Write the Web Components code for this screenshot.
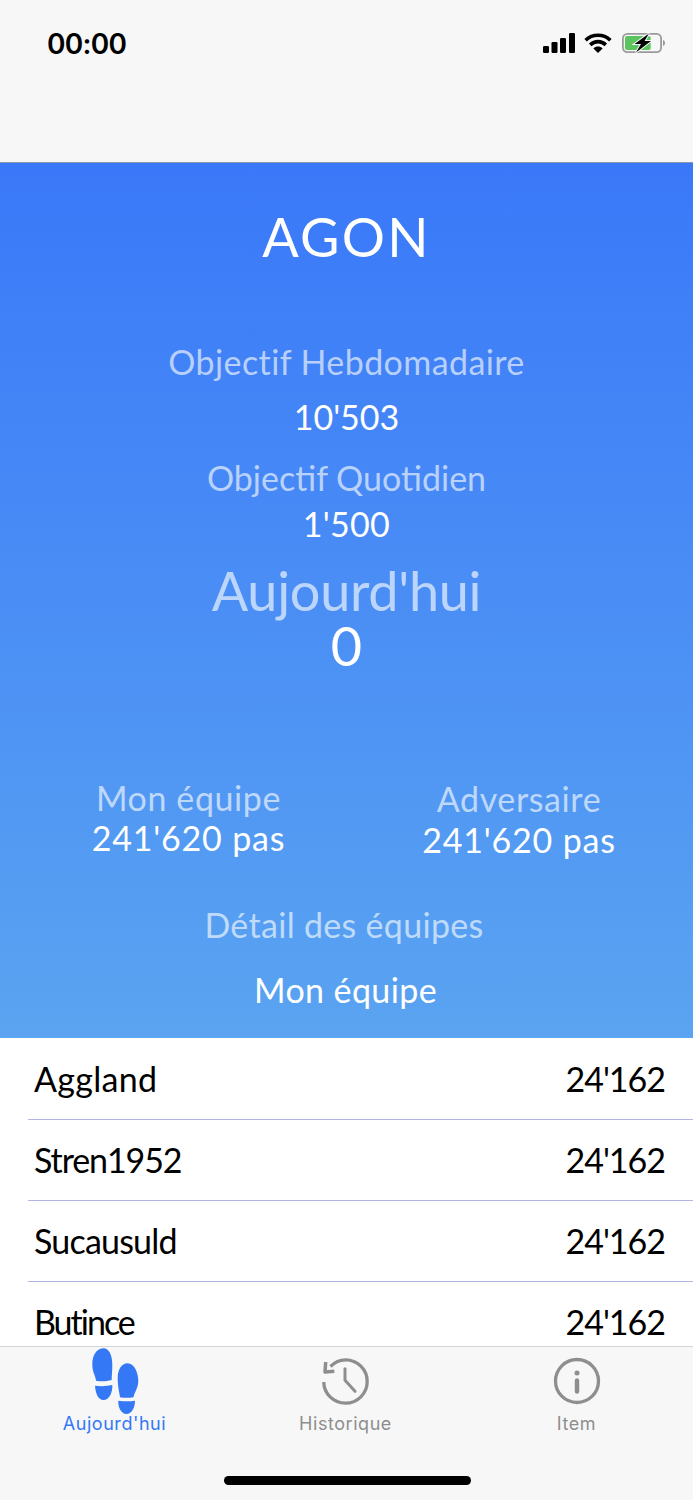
<!DOCTYPE html>
<html lang="fr">
<head>
<meta charset="utf-8">
<title>Agon</title>
<style>
  html, body { margin: 0; padding: 0; background: #fff; }
  body { width: 693px; height: 1500px; overflow: hidden; display: flex; flex-direction: column; font-family: "Lato", sans-serif; }
</style>
</head>
<body>
<status-bar></status-bar>
<agon-hero></agon-hero>
<team-list>
  <team-row name="Aggland" steps="24'162" style="--name-spacing:.3px"></team-row>
  <team-row name="Stren1952" steps="24'162" style="--name-spacing:-1.1px"></team-row>
  <team-row name="Sucausuld" steps="24'162" style="--name-spacing:-.8px"></team-row>
  <team-row name="Butince" steps="24'162" style="--name-spacing:-2px"></team-row>
</team-list>
<tab-bar>
  <tab-item label="Aujourd'hui" icon="steps" active></tab-item>
  <tab-item label="Historique" icon="history"></tab-item>
  <tab-item label="Item" icon="info"></tab-item>
</tab-bar>

<script>
class StatusBar extends HTMLElement {
  constructor() {
    super();
    this.attachShadow({ mode: 'open' });
    this.shadowRoot.innerHTML = `
      <style>
        :host { display: block; height: 163px; box-sizing: border-box; background: #f7f7f7; border-bottom: 1px solid #8d97ab; }
        .bar { display: flex; justify-content: space-between; align-items: center; height: 86px; padding: 0 28px 0 47px; }
        .time { font: 600 28px "Inter", sans-serif; letter-spacing: -.7px; color: #000; padding-top: 1px; }
        .icons { display: flex; align-items: center; gap: 9px; }
        .icons svg:nth-child(2) { margin-right: 1px; }
        svg { display: block; }
      </style>
      <div class="bar">
        <span class="time">00:00</span>
        <div class="icons">
          <svg width="32" height="20" viewBox="0 0 32 20">
            <rect x="0" y="13" width="6" height="7" rx="1.2"/>
            <rect x="8.500" y="9" width="6" height="11" rx="1.2"/>
            <rect x="17" y="5" width="6" height="15" rx="1.2"/>
            <rect x="26" y="0" width="6" height="20" rx="1.2"/>
          </svg>
          <svg width="28" height="20" viewBox="0 0 28 20" fill="none" stroke="#000" stroke-width="3.600">
            <path d="M1.600 7.200C8.600 .6 19.400 .6 26.400 7.200"/>
            <path d="M6.200 11.800C10.800 7.600 17.200 7.600 21.800 11.800"/>
            <path d="M14 20l-4.600-4.600C12 13 16 13 18.600 15.400z" fill="#000" stroke="none"/>
          </svg>
          <svg width="43" height="20" viewBox="0 0 43 20">
            <rect x=".9" y=".9" width="38.200" height="18.200" rx="4.500" fill="none" stroke="#9b9b9b" stroke-width="1.800"/>
            <path d="M41 7c1.200.4 2 1.500 2 3s-.8 2.600-2 3z" fill="#9b9b9b"/>
            <rect x="3" y="3" width="25.700" height="14" rx="2" fill="#5cc45f"/>
            <path d="M27 .5L12.500 11H19L14 19.500 29 8h-6.500z" fill="#000" stroke="#f7f7f7" stroke-width="2" paint-order="stroke"/>
          </svg>
        </div>
      </div>`;
  }
}

class HeroLine extends HTMLElement {
  constructor() {
    super();
    this.attachShadow({ mode: 'open' });
    this.shadowRoot.innerHTML = `
      <style>
        :host { display: block; text-align: center; white-space: nowrap; color: #fff; font-size: 34px; line-height: 40px; }
        :host([soft]) { color: rgba(255, 255, 255, .63); }
      </style>
      <slot></slot>`;
  }
}

class AgonHero extends HTMLElement {
  constructor() {
    super();
    this.attachShadow({ mode: 'open' });
    this.shadowRoot.innerHTML = `
      <style>
        :host { display: block; height: 875px; box-sizing: border-box; padding-top: 44px; background: linear-gradient(#3a78f9, #5aa4f1); }
        .title { font-size: 54px; line-height: 60px; letter-spacing: 2.2px; }
        .big { font-size: 54px; line-height: 52px; }
        .teams { display: grid; grid-template-columns: 377px 284px; justify-content: start; margin-top: 106px; }
        .adv { padding-top: 1px; }
        .adv hero-line + hero-line { margin-top: 1px; }
      </style>
      <hero-line class="title">AGON</hero-line>
      <hero-line soft style="margin-top:75px;letter-spacing:.4px">Objectif Hebdomadaire</hero-line>
      <hero-line style="margin-top:15px">10'503</hero-line>
      <hero-line soft style="margin-top:21px">Objectif Quotidien</hero-line>
      <hero-line style="margin-top:6px;letter-spacing:.3px">1'500</hero-line>
      <hero-line soft class="big" style="margin-top:21px;letter-spacing:-.3px">Aujourd'hui</hero-line>
      <hero-line class="big" style="margin-top:3px">0</hero-line>
      <div class="teams">
        <div>
          <hero-line soft style="letter-spacing:.6px">Mon équipe</hero-line>
          <hero-line style="letter-spacing:.8px">241'620 pas</hero-line>
        </div>
        <div class="adv">
          <hero-line soft style="letter-spacing:.6px">Adversaire</hero-line>
          <hero-line style="letter-spacing:.8px">241'620 pas</hero-line>
        </div>
      </div>
      <hero-line soft style="margin-top:45px;padding-right:5px;letter-spacing:.3px">Détail des équipes</hero-line>
      <hero-line style="margin-top:25px;padding-right:2px;letter-spacing:.4px">Mon équipe</hero-line>`;
  }
}

class TeamList extends HTMLElement {
  constructor() {
    super();
    this.attachShadow({ mode: 'open' });
    this.shadowRoot.innerHTML = `
      <style>
        :host { display: block; height: 308px; box-sizing: border-box; padding-top: 1px; overflow: hidden; background: #fff; }
      </style>
      <slot></slot>`;
  }
}

class TeamRow extends HTMLElement {
  constructor() {
    super();
    this.attachShadow({ mode: 'open' });
    this.shadowRoot.innerHTML = `
      <style>
        :host { display: block; margin-left: 28px; height: 81px; box-sizing: border-box; border-bottom: 1px solid #b5b5e4; }
        .row { display: flex; justify-content: space-between; align-items: center; height: 78px; padding: 0 28px 0 6px; font-size: 34px; color: #000; }
        .name { letter-spacing: var(--name-spacing, 0); }
        .steps { letter-spacing: -1px; }
      </style>
      <div class="row"><span class="name"></span><span class="steps"></span></div>`;
  }
  connectedCallback() {
    this.shadowRoot.querySelector('.name').textContent = this.getAttribute('name');
    this.shadowRoot.querySelector('.steps').textContent = this.getAttribute('steps');
  }
}

class TabBar extends HTMLElement {
  constructor() {
    super();
    this.attachShadow({ mode: 'open' });
    this.shadowRoot.innerHTML = `
      <style>
        :host { display: block; position: relative; height: 154px; box-sizing: border-box; background: #f7f7f7; border-top: 1px solid #d4d4d4; }
        .tabs { display: grid; grid-template-columns: repeat(3, 231px); margin-left: -1px; }
        .home { position: absolute; left: 224px; top: 129px; width: 247px; height: 9px; border-radius: 5px; background: #000; }
      </style>
      <div class="tabs"><slot></slot></div>
      <div class="home"></div>`;
  }
}

const TAB_ICONS = {
  steps: `<svg width="50" height="68" viewBox="0 0 50 68" fill="#3478f6">
      <path d="M13.500 1.300C19 1.300 22.300 8 22.300 18C22.300 24 21.700 29 21.700 33C16 34.500 11 34.500 6 33.700C5.500 28 2.300 26 2.300 17C2.300 8 7 1.300 13.500 1.300z"/>
      <path d="M5 38.700C11 39.500 17 39.200 22.300 38C22.800 45 19.500 53 13.500 53C8 53 5.500 46 5 38.700z"/>
      <path d="M37.500 16.300C44 16.300 48.300 25 48.300 34C48.300 41 44.500 45 43.500 50.300C39 51 34 51 30 50.300C29.500 45 27.700 41 27.700 31C27.700 23 31.500 16.300 37.500 16.300z"/>
      <path d="M28.300 53.700C34 54.500 40 54.500 45 53.700C45 60 42 67 36.500 67C31 67 28 60 28.300 53.700z"/>
    </svg>`,
  history: `<svg width="50" height="50" viewBox="0 0 50 50" fill="none" stroke="#8e8e8e" stroke-width="3.300">
      <path d="M9.500 10.500C13.500 6.300 18.700 3.800 24.500 3.800c12 0 21.700 9.700 21.700 21.700s-9.700 21.700-21.700 21.700S2.800 37.500 2.800 26"/>
      <path d="M4.700 6L4 16l9.300-.7" stroke-width="3.500" stroke-linejoin="round"/>
      <path d="M24 12.700v11.600l10 11" stroke-width="3" stroke-linecap="round" stroke-linejoin="round"/>
    </svg>`,
  info: `<svg width="50" height="50" viewBox="0 0 50 50" fill="none" stroke="#8e8e8e" stroke-width="3.300">
      <circle cx="25" cy="25" r="21.500"/>
      <circle cx="25" cy="17" r="2.500" fill="#8e8e8e" stroke="none"/>
      <path d="M25 24.500v11" stroke-width="4.500" stroke-linecap="round"/>
    </svg>`
};

class TabItem extends HTMLElement {
  constructor() {
    super();
    this.attachShadow({ mode: 'open' });
    this.shadowRoot.innerHTML = `
      <style>
        :host { display: block; color: #8e8e8e; text-align: center; }
        :host([active]) { color: #3478f6; }
        .icon { display: flex; justify-content: center; align-items: flex-start; height: 67px; box-sizing: border-box; padding-top: 9px; }
        :host([active]) .icon { padding-top: 0; }
        svg { display: block; flex: none; }
        .label { font: 400 18px/20px "Inter", sans-serif; letter-spacing: .55px; white-space: nowrap; }
      </style>
      <div class="icon"></div>
      <div class="label"></div>`;
  }
  connectedCallback() {
    this.shadowRoot.querySelector('.icon').innerHTML = TAB_ICONS[this.getAttribute('icon')];
    this.shadowRoot.querySelector('.label').textContent = this.getAttribute('label');
  }
}

customElements.define('status-bar', StatusBar);
customElements.define('hero-line', HeroLine);
customElements.define('agon-hero', AgonHero);
customElements.define('team-list', TeamList);
customElements.define('team-row', TeamRow);
customElements.define('tab-bar', TabBar);
customElements.define('tab-item', TabItem);
</script>
</body>
</html>
